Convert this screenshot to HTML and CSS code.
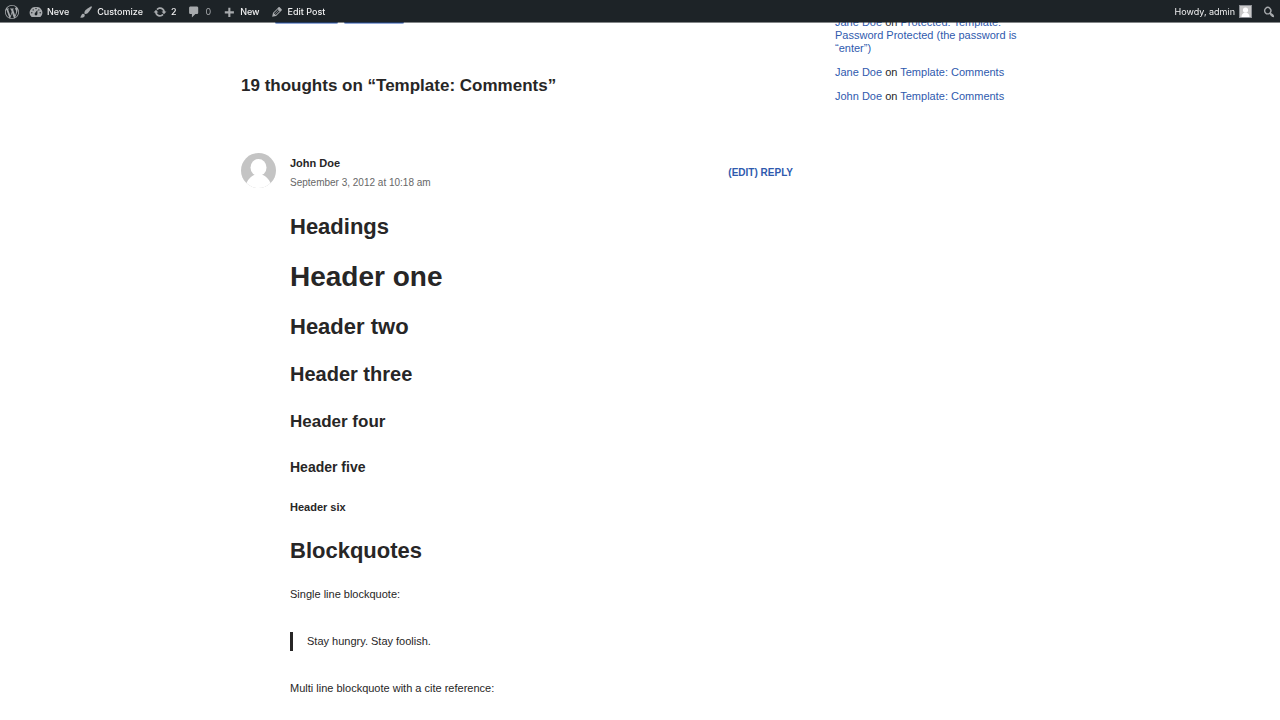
FILE: index.html
```html
<!DOCTYPE html>
<html lang="en">
<head>
<meta charset="utf-8">
<meta name="viewport" content="width=device-width, initial-scale=1">
<title>Template: Comments</title>
<link rel="stylesheet" href="styles.css">
</head>
<body>
<nav class="adminbar" aria-label="Toolbar">
  <a class="bar-item" href="#" aria-label="About WordPress"><svg class="icon" viewBox="0 0 20 20"><path d="M20 10c0-5.51-4.49-10-10-10C4.48 0 0 4.49 0 10c0 5.52 4.48 10 10 10 5.51 0 10-4.48 10-10zM7.78 15.37L4.37 6.22c.55-.02 1.17-.08 1.17-.08.5-.06.44-1.13-.06-1.11 0 0-1.45.11-2.37.11-.18 0-.37 0-.58-.01C4.12 2.69 6.87 1.11 10 1.11c2.33 0 4.45.87 6.05 2.34-.68-.11-1.65.39-1.65 1.58 0 .74.45 1.36.9 2.1.35.61.55 1.36.55 2.46 0 1.49-1.4 5-1.4 5l-3.03-8.37c.54-.02.82-.17.82-.17.5-.05.44-1.25-.06-1.22 0 0-1.44.12-2.38.12-.87 0-2.33-.12-2.33-.12-.5-.03-.56 1.2-.06 1.22l.92.08 1.26 3.41zM17.41 10c.24-.64.74-1.87.43-4.25.7 1.29 1.05 2.71 1.05 4.25 0 3.29-1.73 6.24-4.4 7.78.97-2.59 1.94-5.2 2.92-7.78zM6.1 18.09C3.12 16.65 1.11 13.53 1.11 10c0-1.3.23-2.48.72-3.59C3.25 10.3 4.67 14.2 6.1 18.09zm4.03-6.63l2.58 6.98c-.86.29-1.76.45-2.71.45-.79 0-1.57-.11-2.29-.33.81-2.38 1.62-4.74 2.42-7.1z"/></svg></a>
  <a class="bar-item" href="#"><svg class="icon" viewBox="0 0 20 20"><path fill-rule="evenodd" d="M3.76 17h12.48A8 8 0 0 0 10 3a8 8 0 0 0-6.24 14zM10 4c.55 0 1 .45 1 1s-.45 1-1 1-1-.45-1-1 .45-1 1-1zM6 6c.55 0 1 .45 1 1s-.45 1-1 1-1-.45-1-1 .45-1 1-1zm8 0c.55 0 1 .45 1 1s-.45 1-1 1-1-.45-1-1 .45-1 1-1zm-5.37 5.55L12 7v6c0 1.1-.9 2-2 2s-2-.9-2-2c0-.57.24-1.08.63-1.45zM4 10c.55 0 1 .45 1 1s-.45 1-1 1-1-.45-1-1 .45-1 1-1zm12 0c.55 0 1 .45 1 1s-.45 1-1 1-1-.45-1-1 .45-1 1-1z"/></svg>Neve</a>
  <a class="bar-item" href="#"><svg class="icon" viewBox="0 0 20 20"><path d="M18.33 3.57s.27-.8-.31-1.36c-.53-.52-1.22-.24-1.22-.24-.61.3-5.76 3.47-7.67 5.57-.86.96-2.06 3.79-1.09 4.82.92.98 3.96-.17 4.79-1 2.06-2.06 5.21-7.17 5.5-7.79zM1.4 17.65c2.37-1.56 1.46-3.41 3.23-4.64.93-.65 2.22-.62 3.08.29.63.67.8 2.57-.16 3.46-1.57 1.45-4 1.55-6.15.89z"/></svg>Customize</a>
  <a class="bar-item" href="#"><svg class="icon" viewBox="0 0 20 20"><path d="M10.2 3.28c3.53 0 6.43 2.61 6.92 6h2.08l-3.5 4-3.5-4h2.32c-.45-1.97-2.21-3.45-4.32-3.45-1.45 0-2.73.71-3.54 1.78L4.95 5.66C6.23 4.2 8.11 3.28 10.2 3.28zm-.4 13.44c-3.52 0-6.43-2.61-6.92-6H.8l3.5-4c1.17 1.33 2.33 2.67 3.5 4H5.48c.45 1.97 2.21 3.45 4.32 3.45 1.45 0 2.73-.71 3.54-1.78l1.71 1.95c-1.28 1.46-3.15 2.38-5.25 2.38z"/></svg>2</a>
  <a class="bar-item comments" href="#"><svg class="icon" viewBox="0 0 20 20"><path d="M5 2h9c1.1 0 2 .9 2 2v7c0 1.1-.9 2-2 2h-2l-5 5v-5H5c-1.1 0-2-.9-2-2V4c0-1.1.9-2 2-2z"/></svg>0</a>
  <a class="bar-item" href="#"><svg class="icon" viewBox="0 0 20 20"><path d="M17 9v3h-5v5H9v-5H4V9h5V4h3v5z"/></svg>New</a>
  <a class="bar-item" href="#"><svg class="icon" viewBox="0 0 20 20"><path fill-rule="evenodd" d="M13.89 3.39l2.71 2.72c.46.46.42 1.24.03 1.64l-8.01 8.02-5.56 1.16 1.16-5.58s7.6-7.63 7.99-8.03c.39-.39 1.22-.39 1.68.07zm-2.73 2.79l-5.59 5.61 1.11 1.11 5.54-5.65zm-2.97 8.23l5.58-5.6-1.07-1.08-5.59 5.6z"/></svg>Edit Post</a>
  <a class="bar-item account" href="#">Howdy, admin<svg class="account-photo" viewBox="0 0 13 13"><path fill="#8c8f94" d="M0 0h13v13H0z"/><path fill="#c8c8c8" d="M1 1h11v11H1z"/><circle cx="6.500" cy="5" r="2.600" fill="#fff"/><path fill="#fff" d="M2.500 12c0-3 1.800-4.500 4-4.500s4 1.500 4 4.500z"/></svg></a>
  <a class="bar-item" href="#" aria-label="Search"><svg class="icon" viewBox="0 0 20 20"><path fill-rule="evenodd" d="M12.14 4.18a5.504 5.504 0 0 1 .72 6.92c.12.1.22.21.36.31.2.16.47.36.81.59.34.24.56.39.66.47.42.31.73.57.94.78.32.32.6.65.84 1 .25.35.44.69.59 1.04.14.35.21.68.18 1-.02.32-.14.59-.36.81s-.49.34-.81.36c-.31.02-.65-.04-.99-.19-.35-.14-.7-.34-1.04-.59-.35-.24-.68-.52-1-.84-.21-.21-.47-.52-.77-.93-.1-.13-.25-.35-.47-.66-.22-.32-.4-.57-.56-.78-.16-.2-.29-.35-.44-.5a5.503 5.503 0 0 1-6.44-.98c-2.14-2.15-2.14-5.64 0-7.78a5.498 5.498 0 0 1 7.78-.03zm-1.41 6.36a3.513 3.513 0 0 0 0-4.95 3.495 3.495 0 0 0-4.95 0c-1.37 1.37-1.37 3.58 0 4.95a3.495 3.495 0 0 0 4.95 0z"/></svg></a>
</nav>

<div class="container">
  <main class="content">
    <div class="tags"><span class="tag tag-wide"></span><span class="tag"></span></div>
    <h2 class="comments-title">19 thoughts on “Template: Comments”</h2>
    <article class="comment">
      <header class="comment-header">
        <svg class="avatar" viewBox="0 0 35 35"><defs><clipPath id="round"><circle cx="17.500" cy="17.500" r="17.500"/></clipPath></defs><g clip-path="url(#round)"><path fill="#c4c4c4" d="M0 0h35v35H0z"/><ellipse cx="17.500" cy="14.500" rx="8" ry="8.500" fill="#fff"/><path fill="#fff" d="M4 35c1-6 4-10.500 9-13h9c5 2.500 8 7 9 13z"/></g></svg>
        <div class="comment-author">
          <div class="author-name">John Doe</div>
          <time class="comment-date" datetime="2012-09-03T10:18">September 3, 2012 at 10:18 am</time>
        </div>
        <div class="comment-actions"><a href="#">(EDIT)</a> <a href="#">REPLY</a></div>
      </header>
      <div class="comment-body">
        <h2>Headings</h2>
        <h1>Header one</h1>
        <h2>Header two</h2>
        <h3>Header three</h3>
        <h4>Header four</h4>
        <h5>Header five</h5>
        <h6>Header six</h6>
        <h2>Blockquotes</h2>
        <p>Single line blockquote:</p>
        <blockquote>Stay hungry. Stay foolish.</blockquote>
        <p>Multi line blockquote with a cite reference:</p>
      </div>
    </article>
  </main>
  <aside class="sidebar">
    <ul class="recent-comments">
      <li><a href="#">Jane Doe</a> on <a href="#">Protected: Template: Password Protected (the password is “enter”)</a></li>
      <li><a href="#">Jane Doe</a> on <a href="#">Template: Comments</a></li>
      <li><a href="#">John Doe</a> on <a href="#">Template: Comments</a></li>
    </ul>
  </aside>
</div>
</body>
</html>
```

FILE: styles.css
```css
* { box-sizing: border-box; }

body {
  margin: 0;
  background: #fff;
  color: #272626;
  font: 11px/19px "Liberation Sans", Arial, sans-serif;
}

a { color: #2f5aae; text-decoration: none; }

h1, h2, h3, h4, h5, h6, p, blockquote { margin: 0; }

/* Toolbar fixed over the top of the page */
.adminbar {
  position: fixed;
  top: 0;
  left: 0;
  right: 0;
  z-index: 10;
  display: flex;
  height: 23px;
  background: #1d2327;
  background-clip: padding-box;
  border-bottom: 1px solid rgba(29, 35, 39, 0.55);
  font: 500 9px/22px Inter, sans-serif;
}

.bar-item {
  display: flex;
  align-items: center;
  gap: 4px;
  padding: 1px 5px 0;
  color: #f0f0f1;
}

.bar-item:last-child { padding-right: 4px; }
.icon { width: 14px; height: 14px; fill: #a7aaad; }

.bar-item.comments {
  padding-left: 6px;
  padding-right: 6px;
  color: #a7aaad;
  font-weight: 400;
}

.bar-item.account { margin-left: auto; font-weight: 400; }
.account-photo { width: 13px; height: 13px; }

.container {
  display: flex;
  gap: 42px;
  max-width: 798px;
  margin: 0 auto;
  padding-top: 16px;
}

.content { flex: 1; min-width: 0; }

.tags {
  display: flex;
  gap: 6px;
  padding-left: 34px;
}

.tag {
  width: 60px;
  height: 8px;
  border-bottom: 1px solid #8fa6d6;
  border-radius: 0 0 2px 2px;
  background: #2f5aae;
}

.tag-wide { width: 63px; }

.comments-title {
  margin: 50px 0 55px;
  font-size: 17px;
  line-height: 24px;
}

.comment-header {
  display: flex;
  align-items: center;
  gap: 14px;
}

.avatar {
  width: 35px;
  height: 35px;
  align-self: flex-start;
}

.comment-author { flex: 1; }
.author-name { font-weight: 700; line-height: 20px; }

.comment-date {
  display: block;
  color: #676767;
  font-size: 10px;
}

.comment-actions { font-size: 10px; font-weight: 700; }

.comment-body {
  display: flex;
  flex-direction: column;
  gap: 20px;
  padding: 21px 0 0 49px;
}

.comment-body h1 { font-size: 28px; line-height: 32px; }
.comment-body h2 { font-size: 22px; line-height: 28px; }
.comment-body h3 { font-size: 20px; line-height: 26px; }
.comment-body h4 { font-size: 17px; line-height: 30px; }
.comment-body h5 { font-size: 14px; line-height: 20px; }
.comment-body h6 { font-size: 11px; line-height: 20px; }

.comment-body blockquote {
  margin: 8px 0;
  padding-left: 14px;
  border-left: 3px solid #272626;
}

.sidebar { width: 204px; line-height: 13px; }

.recent-comments {
  display: flex;
  flex-direction: column;
  gap: 11px;
  margin: 0;
  padding: 0;
  list-style: none;
}
```
